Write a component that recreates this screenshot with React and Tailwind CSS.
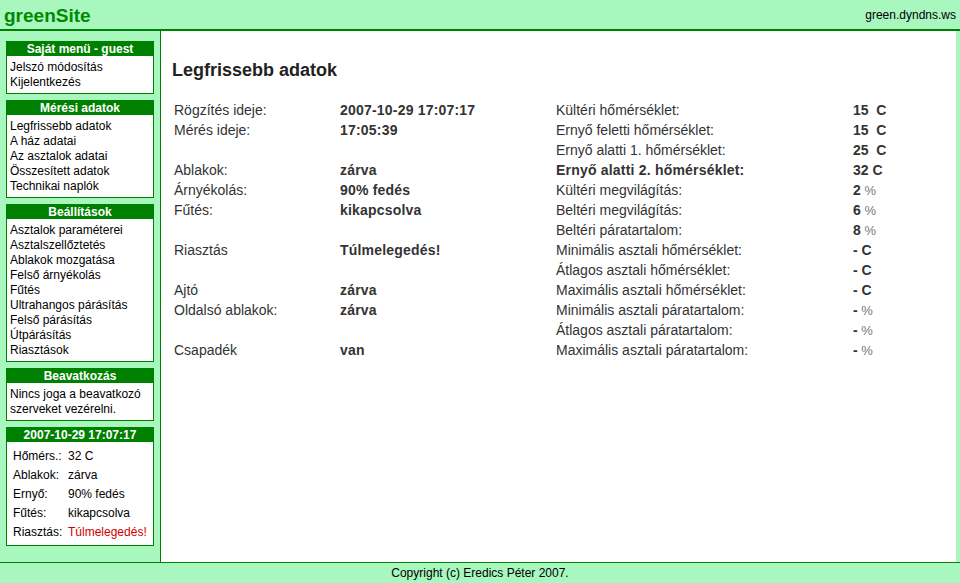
import React from "react";

const F = "font-['Liberation_Sans',Arial,Helvetica,sans-serif]";

function Box({ title, children, bodyClass = "px-[3px] pt-[4px] pb-[3px]" }) {
  return (
    <div className="border border-[#008000] bg-white">
      <div className="bg-[#008000] text-white font-bold text-center h-[14px] leading-[14px] text-[12px]">
        {title}
      </div>
      <div className={bodyClass}>{children}</div>
    </div>
  );
}

const leftRows = [
  ["Rögzítés ideje:", "2007-10-29 17:07:17"],
  ["Mérés ideje:", "17:05:39"],
  ["", ""],
  ["Ablakok:", "zárva"],
  ["Árnyékolás:", "90% fedés"],
  ["Fűtés:", "kikapcsolva"],
  ["", ""],
  ["Riasztás", "Túlmelegedés!"],
  ["", ""],
  ["Ajtó", "zárva"],
  ["Oldalsó ablakok:", "zárva"],
  ["", ""],
  ["Csapadék", "van"],
];

const rightRows = [
  ["Kültéri hőmérséklet:", "15\u00a0\u00a0C", ""],
  ["Ernyő feletti hőmérséklet:", "15\u00a0\u00a0C", ""],
  ["Ernyő alatti 1. hőmérséklet:", "25\u00a0\u00a0C", ""],
  ["Ernyő alatti 2. hőmérséklet:", "32 C", "", true],
  ["Kültéri megvilágítás:", "2", "%"],
  ["Beltéri megvilágítás:", "6", "%"],
  ["Beltéri páratartalom:", "8", "%"],
  ["Minimális asztali hőmérséklet:", "- C", ""],
  ["Átlagos asztali hőmérséklet:", "- C", ""],
  ["Maximális asztali hőmérséklet:", "- C", ""],
  ["Minimális asztali páratartalom:", "-", "%"],
  ["Átlagos asztali páratartalom:", "-", "%"],
  ["Maximális asztali páratartalom:", "-", "%"],
];

export default function App() {
  const rows = leftRows.map((l, i) => [l, rightRows[i]]);
  return (
    <div className={`${F} w-[960px] h-[583px] flex flex-col bg-[#a7f7bf] overflow-hidden`}>
      {/* header */}
      <div className="h-[31px] shrink-0 border-b-2 border-[#008000] flex justify-between items-start">
        <div className="pl-[4px] pt-[5px] text-[19px] leading-[22px] font-bold text-[#008a00]">greenSite</div>
        <div className="pr-[4px] pt-[8px] text-[12px] leading-[15px] text-black">green.dyndns.ws</div>
      </div>

      {/* middle */}
      <div className="flex-1 flex min-h-0">
        <div className="w-[161px] shrink-0 border-r border-[#008000] px-[6px] pt-[10px] flex flex-col gap-[6px] text-[12px] leading-[15px] text-black">
          <Box title="Saját menü - guest">
            <div>Jelszó módosítás</div>
            <div>Kijelentkezés</div>
          </Box>
          <Box title="Mérési adatok">
            <div>Legfrissebb adatok</div>
            <div>A ház adatai</div>
            <div>Az asztalok adatai</div>
            <div>Összesített adatok</div>
            <div>Technikai naplók</div>
          </Box>
          <Box title="Beállítások">
            <div>Asztalok paraméterei</div>
            <div>Asztalszellőztetés</div>
            <div>Ablakok mozgatása</div>
            <div>Felső árnyékolás</div>
            <div>Fűtés</div>
            <div>Ultrahangos párásítás</div>
            <div>Felső párásítás</div>
            <div>Útpárásítás</div>
            <div>Riasztások</div>
          </Box>
          <Box title="Beavatkozás">
            <div>Nincs joga a beavatkozó szerveket vezérelni.</div>
          </Box>
          <Box title="2007-10-29 17:07:17" bodyClass="pl-[6px] pt-[5px] pb-[3px]">
            {[
              ["Hőmérs.:", "32 C"],
              ["Ablakok:", "zárva"],
              ["Ernyő:", "90% fedés"],
              ["Fűtés:", "kikapcsolva"],
              ["Riasztás:", "Túlmelegedés!"],
            ].map(([a, b], i) => (
              <div key={i} className="flex h-[19px] leading-[19px] whitespace-nowrap">
                <div className="w-[55px] shrink-0">{a}</div>
                <div className={i === 4 ? "text-[#d00000]" : ""}>{b}</div>
              </div>
            ))}
          </Box>
        </div>

        <div className="flex-1 bg-white pl-[11px] pt-[29px] text-[#333]">
          <div className="text-[18px] leading-[21px] font-bold text-[#222] mb-[19px]">Legfrissebb adatok</div>
          <div className="ml-[2px] grid grid-cols-[166px_216px_297px_1fr] text-[14px]">
            {rows.map(([l, r], i) => (
              <React.Fragment key={i}>
                <div className="h-[20px] leading-[20px] whitespace-nowrap">{l[0]}</div>
                <div className="h-[20px] leading-[20px] whitespace-nowrap font-bold tracking-[0.2px]">{l[1]}</div>
                <div className={`h-[20px] leading-[20px] whitespace-nowrap ${r[3] ? "font-bold tracking-[0.2px]" : ""}`}>{r[0]}</div>
                <div className="h-[20px] leading-[20px] whitespace-nowrap">
                  <span className="font-bold">{r[1]}</span>
                  {r[2] && <span className="text-[#777] text-[13px]"> {r[2]}</span>}
                </div>
              </React.Fragment>
            ))}
          </div>
        </div>
        <div className="w-[4px] shrink-0"></div>
      </div>

      {/* footer */}
      <div className="h-[21px] shrink-0 border-t border-[#008000] text-center text-[12px] leading-[20px] text-black">
        Copyright (c) Eredics Péter 2007.
      </div>
    </div>
  );
}
